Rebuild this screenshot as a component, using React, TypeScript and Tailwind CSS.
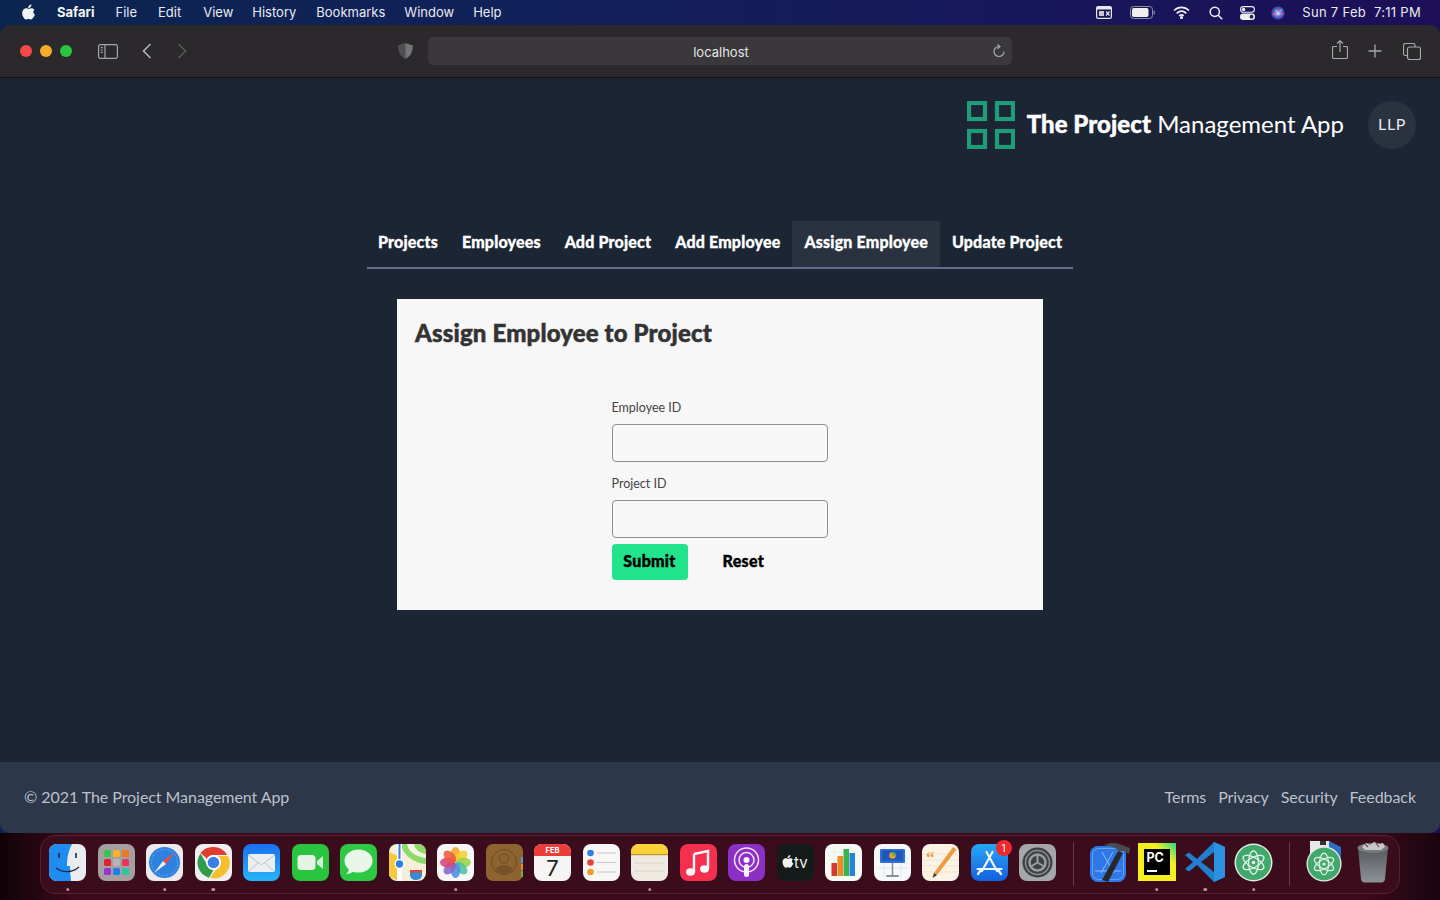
import React from "react";

const F = { fontFamily: 'Lato, "Liberation Sans", sans-serif' };
const U = { fontFamily: "Inter, sans-serif" };

const applePath = "M10.4 0.5c.1 1-.3 1.9-.9 2.6-.6.7-1.5 1.2-2.4 1.1-.1-1 .4-1.9.9-2.5.6-.7 1.6-1.2 2.4-1.2zM13.4 5.9c-1.7 1-1.5 3.6.5 4.5-.4 1.1-.9 2.2-1.6 3.2-.6.9-1.3 1.9-2.3 1.9-1 0-1.3-.6-2.5-.6s-1.5.6-2.5.6c-1 0-1.7-1-2.4-2C1.3 11.7.5 8.2 2.1 6c.8-1.1 2-1.7 3.1-1.7 1.1 0 1.8.7 2.7.7.9 0 1.4-.7 2.7-.7 1.1 0 2.1.5 2.8 1.6z";

function MenuBar() {
  return (
    <div className="h-[25px] shrink-0 flex items-center text-[13px] text-[#e9ebf2] pl-[21px] pr-[19px]" style={U}>
      <svg width="15" height="17" viewBox="0 0 15 17" fill="#f2f2f2"><path d={applePath} /></svg>
      <span className="ml-[21px] font-bold text-[#f4f4f6]">Safari</span>
      <div className="ml-[21px] flex">
        <span>File</span>
        <span className="ml-[21px]">Edit</span>
        <span className="ml-[22px]">View</span>
        <span className="ml-[19px]">History</span>
        <span className="ml-[20px]">Bookmarks</span>
        <span className="ml-[19px]">Window</span>
        <span className="ml-[19px]">Help</span>
      </div>
      <div className="ml-auto flex items-center">
        <svg width="16" height="13" viewBox="0 0 16 13" className="mr-[18px]">
          <rect x="0.6" y="0.6" width="14.8" height="11.8" rx="1.5" fill="none" stroke="#e8e8ee" strokeWidth="1.2" />
          <rect x="1" y="1" width="14" height="2.5" fill="#e8e8ee" />
          <rect x="3" y="5" width="5" height="5" fill="#c8c8d0" />
          <path d="M10 5.5l3.5 4M13.5 5.5l-3.5 4" stroke="#e8e8ee" strokeWidth="1.2" />
        </svg>
        <svg width="25" height="13" viewBox="0 0 25 13" className="mr-[18px]">
          <rect x="0.5" y="0.5" width="22" height="12" rx="3" fill="none" stroke="#8f8fa3" />
          <rect x="2" y="2" width="16.5" height="9" rx="1.8" fill="#f0f0f3" />
          <rect x="23.5" y="4.5" width="1.2" height="4" rx="0.6" fill="#8f8fa3" />
        </svg>
        <svg width="17" height="13" viewBox="0 0 17 13" fill="none" stroke="#f0f0f3" strokeWidth="1.7" className="mr-[19px]">
          <path d="M1 4.5C5.5 0.3 11.5 0.3 16 4.5" />
          <path d="M3.7 7.3c2.9-2.6 6.7-2.6 9.6 0" />
          <path d="M6.3 9.8c1.4-1.1 3-1.1 4.4 0" />
          <circle cx="8.5" cy="11.6" r="0.7" fill="#f0f0f3" />
        </svg>
        <svg width="14" height="14" viewBox="0 0 14 14" fill="none" stroke="#f0f0f3" strokeWidth="1.5" className="mr-[17px]">
          <circle cx="5.8" cy="5.8" r="4.6" />
          <path d="M9.2 9.2l4 4" />
        </svg>
        <svg width="15" height="14" viewBox="0 0 15 14" className="mr-[16px]">
          <rect x="0.6" y="0.6" width="13.8" height="5.6" rx="2.8" fill="none" stroke="#f0f0f3" strokeWidth="1.1" />
          <circle cx="3.6" cy="3.4" r="1.7" fill="#f0f0f3" />
          <rect x="0" y="7.5" width="15" height="6.5" rx="3.25" fill="#f0f0f3" />
          <circle cx="11.5" cy="10.75" r="1.9" fill="#2a2356" />
        </svg>
        <svg width="14" height="14" viewBox="0 0 14 14" className="mr-[17px]">
          <defs>
            <radialGradient id="siri" cx="0.5" cy="0.5" r="0.6">
              <stop offset="0" stopColor="#f5f5ff" />
              <stop offset="0.45" stopColor="#5a6de0" />
              <stop offset="1" stopColor="#2a1f5c" />
            </radialGradient>
          </defs>
          <circle cx="7" cy="7" r="6.8" fill="url(#siri)" />
          <path d="M2 9c2-1 3-4 5-4s2 3 5 3" stroke="#e75fa8" strokeWidth="1.4" fill="none" />
          <path d="M4 4l4 3 3-4" stroke="#5fe0e8" strokeWidth="1" fill="none" />
        </svg>
        <span className="tracking-[0.3px]">Sun 7 Feb&nbsp; 7:11 PM</span>
      </div>
    </div>
  );
}

function Toolbar() {
  return (
    <div className="h-[53px] shrink-0 flex items-center bg-[#2b292b] border-b border-[#151517] pl-[20px] pr-[19px] rounded-t-[10px]">
      <div className="flex gap-[8px]">
        <span className="w-[12px] h-[12px] rounded-full bg-[#f5484a]" />
        <span className="w-[12px] h-[12px] rounded-full bg-[#f7ab2a]" />
        <span className="w-[12px] h-[12px] rounded-full bg-[#2ac53f]" />
      </div>
      <svg width="20" height="15" viewBox="0 0 20 15" fill="none" stroke="#a5a5a7" strokeWidth="1.2" className="ml-[26px]">
        <rect x="0.6" y="0.6" width="18.8" height="13.8" rx="1.8" />
        <path d="M7 0.6v13.8" />
        <path d="M2.8 3.7h2M2.8 6h2M2.8 8.3h2" />
      </svg>
      <svg width="10" height="16" viewBox="0 0 10 16" fill="none" stroke="#b5b5b7" strokeWidth="1.6" className="ml-[24px] mb-[1px]">
        <path d="M8.5 1L1.5 8l7 7" />
      </svg>
      <svg width="10" height="16" viewBox="0 0 10 16" fill="none" stroke="#585858" strokeWidth="1.6" className="ml-[25px] mb-[1px]">
        <path d="M1.5 1l7 7-7 7" />
      </svg>
      <svg width="15" height="16" viewBox="0 0 15 16" className="ml-[211px]">
        <path d="M7.5 0.5L14.5 2.5c0 6-1.5 10.5-7 13-5.500-2.500-7-7-7-13z" fill="#4e4e50" stroke="#5e5e60" strokeWidth="0.6" />
        <path d="M7.5 0.5L14.5 2.5c0 6-1.5 10.5-7 13z" fill="#757577" />
      </svg>
      <div className="ml-[15px] w-[584px] h-[28px] rounded-[5px] bg-[#3a383a] flex items-center pr-[7px]">
        <span className="flex-1 text-center text-[13px] text-[#e5e5e6] pl-[21px] pt-[4px]" style={U}>localhost</span>
        <svg width="12" height="14" viewBox="0 0 12 14" fill="none" stroke="#a8a8aa" strokeWidth="1.2">
          <path d="M6 2.5A5 5 0 1 0 11 7.5" />
          <path d="M4.5 0.5L7 2.5 4.5 4.8" />
        </svg>
      </div>
      <svg width="16" height="19" viewBox="0 0 16 19" fill="none" stroke="#a8a8aa" strokeWidth="1.2" className="ml-auto mr-[20px] mb-[3px]">
        <path d="M5 6.5H1.5a1 1 0 0 0-1 1V17a1.5 1.5 0 0 0 1.5 1.5h12a1.5 1.5 0 0 0 1.5-1.5V7.5a1 1 0 0 0-1-1H11" />
        <path d="M8 12V1M5 3.5L8 .8l3 2.7" />
      </svg>
      <svg width="14" height="14" viewBox="0 0 14 14" stroke="#a8a8aa" strokeWidth="1.3" className="mr-[21px]">
        <path d="M7 0.5v13M0.5 7h13" />
      </svg>
      <svg width="18" height="17" viewBox="0 0 18 17" fill="none" stroke="#a8a8aa" strokeWidth="1.2">
        <path d="M4 12.5H2.5a2 2 0 0 1-2-2V2.5a2 2 0 0 1 2-2H10a2 2 0 0 1 2 2V4" />
        <rect x="4.5" y="4" width="13" height="12.5" rx="2" />
      </svg>
    </div>
  );
}

function Logo() {
  return (
    <svg width="48" height="48" viewBox="0 0 48 48" fill="none" stroke="#1f9c78" strokeWidth="4.2">
      <rect x="2" y="2" width="16" height="16" />
      <rect x="30" y="2" width="16" height="16" />
      <rect x="2" y="30" width="16" height="16" />
      <rect x="30" y="30" width="16" height="16" />
    </svg>
  );
}

function Header() {
  return (
    <div className="flex justify-end items-center pt-[23px] pr-[24px]">
      <Logo />
      <div className="ml-[12px] pb-[2px] text-[24px] text-white leading-none whitespace-nowrap" style={F}>
        <span className="font-black tracking-[0.05px] [-webkit-text-stroke:0.4px]">The Project</span>{" "}
        <span className="font-normal">Management App</span>
      </div>
      <div className="ml-[24px] w-[48px] h-[48px] pb-[2px] rounded-full bg-[#2a3240] flex items-center justify-center text-[16px] text-[#e6e8ec] tracking-[0.6px]" style={F}>LLP</div>
    </div>
  );
}

function Nav() {
  const tabs = ["Projects", "Employees", "Add Project", "Add Employee", "Assign Employee", "Update Project"];
  return (
    <div className="mt-[72px] self-center w-[706px] border-b-2 border-[#636d8a] h-[48px]">
      <div className="flex -ml-px">
        {tabs.map((t) => (
          <div key={t} className={`h-[46px] px-[12px] pb-[4px] flex items-center text-[16px] font-black tracking-[0.17px] [-webkit-text-stroke:0.3px] whitespace-nowrap text-white ${t === "Assign Employee" ? "bg-[#2a3240]" : ""}`} style={F}>
            {t}
          </div>
        ))}
      </div>
    </div>
  );
}

function Field({ label }: { label: string }) {
  return (
    <div className="flex flex-col">
      <label className="text-[12.5px] leading-[16px] text-[#444444] h-[16px]" style={F}>{label}</label>
      <input className="mt-[8px] h-[38px] w-[216.5px] rounded-[4px] border border-[#8e8e8e] bg-[#f7f7f7]" />
    </div>
  );
}

function Card() {
  return (
    <div className="mt-[30px] self-center w-[646px] h-[311px] bg-[#f7f7f7] flex flex-col">
      <h1 className="mt-[18px] ml-[18px] text-[24px] leading-[32px] font-black text-[#333333] tracking-[0.15px] [-webkit-text-stroke:0.5px]" style={F}>Assign Employee to Project</h1>
      <div className="mt-[51px] ml-[214.5px] flex flex-col gap-[14px]">
        <Field label="Employee ID" />
        <Field label="Project ID" />
      </div>
      <div className="mt-[6px] ml-[214.5px] flex items-center">
        <button className="w-[76px] h-[36px] pb-[2px] rounded-[4px] bg-[#20e38b] text-[16px] font-black text-black tracking-[0.3px] [-webkit-text-stroke:0.4px]" style={F}>Submit</button>
        <button className="ml-[35px] pb-[2px] text-[16px] font-black text-black tracking-[0.3px] [-webkit-text-stroke:0.4px]" style={F}>Reset</button>
      </div>
    </div>
  );
}

function Footer() {
  return (
    <div className="mt-auto h-[71px] pb-[2px] shrink-0 bg-[#2c374a] flex items-center justify-between px-[24px] text-[16px] text-[#bcc1ca] tracking-[-0.06px]" style={F}>
      <span>© 2021 The Project Management App</span>
      <div className="flex gap-[12px]">
        <span>Terms</span>
        <span>Privacy</span>
        <span>Security</span>
        <span>Feedback</span>
      </div>
    </div>
  );
}

const I = ({ children }: { children: React.ReactNode }) => (
  <svg width="37" height="37" viewBox="0 0 37 37">{children}</svg>
);

function Finder() {
  return (
    <I>
      <rect width="37" height="37" rx="8" fill="#e9edf1" />
      <path d="M8 0h15c-3 6-5 12-5 22h3c0 5 .5 10 1 15H8a8 8 0 0 1-8-8V8a8 8 0 0 1 8-8z" fill="#1f8cf0" />
      <path d="M10 9v5M27 9v5" stroke="#1c2c44" strokeWidth="1.6" />
      <path d="M7 24c7 5 16 5 23-1" fill="none" stroke="#1c2c44" strokeWidth="1.3" />
    </I>
  );
}
function Launchpad() {
  const c = ["#38c452", "#f5b324", "#ee7a1e", "#e0202e", "#b5b5b5", "#ea3560", "#9a35cf", "#1e80ea", "#2cc7a0"];
  return (
    <I>
      <rect width="37" height="37" rx="8" fill="#a79ea1" />
      {c.map((f, i) => (
        <rect key={i} x={6 + (i % 3) * 9} y={6 + Math.floor(i / 3) * 9} width="7" height="7" rx="1.5" fill={f} />
      ))}
    </I>
  );
}
function Safari() {
  return (
    <I>
      <rect width="37" height="37" rx="8" fill="#eceaea" />
      <circle cx="18.5" cy="18.5" r="15.5" fill="#2f81e0" />
      <circle cx="18.5" cy="18.5" r="13" fill="none" stroke="#a8cdf5" strokeWidth="1" strokeDasharray="0.8 2" />
      <path d="M29 8L20 20l-3-3z" fill="#ef4a3c" />
      <path d="M8 29l9-12 3 3z" fill="#f0f0f0" />
    </I>
  );
}
function Chrome() {
  return (
    <I>
      <rect width="37" height="37" rx="8" fill="#f0eeee" />
      <path d="M18.5 3A15.5 15.5 0 0 1 32 11H18.5a7.5 7.5 0 0 0-6.5 3.7L5.5 9A15.5 15.5 0 0 1 18.5 3z" fill="#e03c32" />
      <path d="M5.5 9.5L12 20.5a7.5 7.5 0 0 0 7 4.5l-5 8.7A15.5 15.5 0 0 1 5.5 9.5z" fill="#2e9c4a" />
      <path d="M33 12a15.5 15.5 0 0 1-18 21.8L22 24a7.5 7.5 0 0 0 1-12z" fill="#f5c02e" />
      <circle cx="18.5" cy="18.5" r="7.5" fill="#fff" />
      <circle cx="18.5" cy="18.5" r="5.8" fill="#3a7fe8" />
    </I>
  );
}
function Mail() {
  return (
    <I>
      <defs>
        <linearGradient id="mailg" x1="0" y1="0" x2="0" y2="1">
          <stop offset="0" stopColor="#1a6ff0" />
          <stop offset="1" stopColor="#26b5f8" />
        </linearGradient>
      </defs>
      <rect width="37" height="37" rx="8" fill="url(#mailg)" />
      <rect x="5" y="10" width="27" height="18" rx="2" fill="#eceef2" />
      <path d="M5.5 11l13 10 13-10M5.5 27.5l10-9M31.5 27.5l-10-9" fill="none" stroke="#b5bcc8" strokeWidth="0.9" />
    </I>
  );
}
function Facetime() {
  return (
    <I>
      <rect width="37" height="37" rx="8" fill="#2ac53f" />
      <rect x="5.5" y="11" width="18" height="15" rx="3.5" fill="#e4f3e4" />
      <path d="M25 17l6-5v13l-6-5z" fill="#d8efd8" />
    </I>
  );
}
function Messages() {
  return (
    <I>
      <rect width="37" height="37" rx="8" fill="#2ec944" />
      <ellipse cx="18.5" cy="17" rx="14" ry="11.5" fill="#e9f5e9" />
      <path d="M9 24c0 3-1.5 5-3 6 3 0 6-1 8-3z" fill="#e9f5e9" />
    </I>
  );
}
function Maps() {
  return (
    <I>
      <rect width="37" height="37" rx="8" fill="#f5efd8" />
      <path d="M12 0h17a8 8 0 0 1 8 8v12C30 20 14 14 12 0z" fill="#8fd86a" />
      <path d="M18 0h7c1 6 6 9 12 10v4C28 13 19 8 18 0z" fill="#f4f4e4" />
      <path d="M0 8v24l9 5V12z" fill="#f4c93c" />
      <rect x="8" y="0" width="5" height="37" fill="#fff" />
      <rect x="9.5" y="0" width="2" height="15" fill="#2f7fe8" />
      <circle cx="10.5" cy="20" r="5" fill="#fff" />
      <circle cx="10.5" cy="20" r="3.7" fill="#2f7fe8" />
      <path d="M21 26h12v6c-1 3-4 4-6 4-3 0-6-2-6-5z" fill="#3a8ad0" />
      <rect x="21" y="26" width="12" height="2.5" fill="#e0443a" />
    </I>
  );
}
function Photos() {
  const c = ["#f5a623", "#f3d22e", "#9ed24a", "#4fc3a0", "#4a8fe0", "#8a65c8", "#d8457a", "#ee5a3a"];
  return (
    <I>
      <rect width="37" height="37" rx="8" fill="#f7f7f7" />
      {c.map((f, i) => (
        <ellipse key={i} cx="18.5" cy="10.5" rx="4.8" ry="7.5" fill={f} opacity="0.88" transform={`rotate(${i * 45} 18.5 18.5)`} />
      ))}
    </I>
  );
}
function Contacts() {
  return (
    <I>
      <rect width="37" height="37" rx="7" fill="#8d6430" />
      <rect x="35" y="13" width="2" height="6" fill="#4a9ad0" />
      <rect x="35" y="20" width="2" height="6" fill="#e08a2c" />
      <rect x="35" y="27" width="2" height="6" fill="#6ab04c" />
      <circle cx="18" cy="18" r="12.5" fill="none" stroke="#6a4a24" strokeWidth="1" />
      <circle cx="18" cy="14.5" r="4.7" fill="none" stroke="#6a4a24" strokeWidth="1" />
      <path d="M9 27c2-5 5-6 9-6s7 1 9 6c-5 4-13 4-18 0z" fill="#75522a" />
    </I>
  );
}
function Calendar() {
  return (
    <I>
      <rect width="37" height="37" rx="8" fill="#f7f5f4" />
      <path d="M8 0h21a8 8 0 0 1 8 8v4H0V8a8 8 0 0 1 8-8z" fill="#ea3e3a" />
      <text x="18.5" y="9" textAnchor="middle" fontSize="7.5" fontWeight="700" fill="#fff" fontFamily="Inter, sans-serif">FEB</text>
      <text x="18.5" y="32" textAnchor="middle" fontSize="22" fill="#222" fontFamily="Inter, sans-serif">7</text>
    </I>
  );
}
function Reminders() {
  const rows: [number, string][] = [[9, "#2f7fe8"], [18.5, "#e0443a"], [28, "#ef9a2a"]];
  return (
    <I>
      <rect width="37" height="37" rx="8" fill="#f8f7f5" />
      {rows.map(([y, f]) => (
        <g key={y}>
          <circle cx="7.5" cy={y} r="3.3" fill={f} />
          <rect x="14" y={y - 0.5} width="19" height="1" fill="#c6c6c6" />
        </g>
      ))}
    </I>
  );
}
function Notes() {
  return (
    <I>
      <rect width="37" height="37" rx="8" fill="#eeeae2" />
      <path d="M8 0h21a8 8 0 0 1 8 8v2H0V8a8 8 0 0 1 8-8z" fill="#fbd13a" />
      <rect y="10" width="37" height="1.2" fill="#b8952a" />
      <path d="M3 19h31M3 27h31" stroke="#d5d0c6" strokeWidth="0.8" />
    </I>
  );
}
function Music() {
  return (
    <I>
      <rect width="37" height="37" rx="8" fill="#f5304e" />
      <path d="M14 10l14-3v18" fill="none" stroke="#f8f8f8" strokeWidth="2.4" />
      <path d="M14 10v18" stroke="#f8f8f8" strokeWidth="2.4" />
      <ellipse cx="10.5" cy="28" rx="4.5" ry="3.7" fill="#f8f8f8" />
      <ellipse cx="24.5" cy="25" rx="4.5" ry="3.7" fill="#f8f8f8" />
    </I>
  );
}
function Podcasts() {
  return (
    <I>
      <rect width="37" height="37" rx="8" fill="#8c2fc4" />
      <circle cx="18.5" cy="16" r="12" fill="none" stroke="#f0e4f8" strokeWidth="1.5" />
      <circle cx="18.5" cy="16" r="7.5" fill="none" stroke="#f0e4f8" strokeWidth="1.5" />
      <circle cx="18.5" cy="16" r="3" fill="#f8f0fc" />
      <rect x="16" y="20" width="5" height="13" rx="2.5" fill="#f8f0fc" />
    </I>
  );
}
function AppleTV() {
  return (
    <I>
      <rect width="37" height="37" rx="8" fill="#151a1a" />
      <g transform="translate(4.5 10.5) scale(0.85)">
        <path d={applePath} fill="#f0f0f0" />
      </g>
      <text x="17" y="23.5" fontSize="15" fill="#f0f0f0" fontFamily="Inter, sans-serif">tv</text>
    </I>
  );
}
function Numbers() {
  return (
    <I>
      <rect width="37" height="37" rx="8" fill="#f7f9f5" />
      <path d="M5 8h27M5 15h27M5 22h27M5 29h27M9 3v31M17 3v31M25 3v31" stroke="#dbe8d8" strokeWidth="0.5" />
      <rect x="6.5" y="19" width="5.5" height="13" fill="#d53a2e" />
      <rect x="12.5" y="12" width="5.5" height="20" fill="#ee8a26" />
      <rect x="18.5" y="5" width="5.5" height="27" fill="#38b54a" />
      <rect x="24.5" y="9" width="5.5" height="23" fill="#2a80dc" />
    </I>
  );
}
function Keynote() {
  return (
    <I>
      <rect width="37" height="37" rx="8" fill="#f7f8f9" />
      <path d="M3 14h31M3 24h31M10 3v31M27 3v31" stroke="#d6e2ee" strokeWidth="0.7" />
      <rect x="6" y="5" width="25" height="14" rx="1" fill="#2f6fd8" />
      <rect x="8" y="6.5" width="21" height="10" fill="#1f58b8" />
      <circle cx="18.5" cy="11.5" r="3.3" fill="#e2a03a" />
      <path d="M18.5 8.2a3.3 3.3 0 0 1 3.3 3.3h-3.3z" fill="#4ab04a" />
      <rect x="17.7" y="19" width="1.6" height="13" fill="#8c8f94" />
      <rect x="12" y="31" width="13" height="2" rx="1" fill="#8c8f94" />
    </I>
  );
}
function Pages() {
  return (
    <I>
      <rect width="37" height="37" rx="8" fill="#fbf3e6" />
      <path d="M0 10h37M0 16h37M0 22h37M0 28h37" stroke="#f3d9c0" strokeWidth="0.6" />
      <text x="4" y="19" fontSize="17" fontWeight="700" fill="#ee9a3a" fontFamily="Liberation Serif, serif">“</text>
      <path d="M31 3l3.5 2.5L15 31l-3-2z" fill="#ee9a3a" />
      <path d="M12 29l3 2-4.5 3z" fill="#3a3a3a" />
    </I>
  );
}
function AppStore() {
  return (
    <I>
      <defs>
        <linearGradient id="asg" x1="0" y1="0" x2="0" y2="1">
          <stop offset="0" stopColor="#26a8f5" />
          <stop offset="1" stopColor="#1560e0" />
        </linearGradient>
      </defs>
      <rect width="37" height="37" rx="8" fill="url(#asg)" />
      <path d="M21.5 8L11 27M15.5 8L26 27M6.5 25h24M7 30l2.5-3.5M30 30l-2.5-3.5" stroke="#f4f8fd" strokeWidth="2.2" strokeLinecap="round" />
    </I>
  );
}
function Settings() {
  return (
    <I>
      <rect width="37" height="37" rx="8" fill="#a5a7a8" />
      <circle cx="18.5" cy="18.5" r="15" fill="#3e4042" />
      <circle cx="18.5" cy="18.5" r="12" fill="none" stroke="#8c8e90" strokeWidth="1.5" />
      <circle cx="18.5" cy="18.5" r="8" fill="none" stroke="#9a9c9e" strokeWidth="2.5" />
      <path d="M18.5 18.5V10M18.5 18.5l7.5 4.5M18.5 18.5L11 23" stroke="#9a9c9e" strokeWidth="2" />
    </I>
  );
}
function Xcode() {
  return (
    <svg width="46" height="42" viewBox="0 0 46 42">
      <rect x="5" y="5" width="36" height="36" rx="8" fill="#2f78e8" />
      <rect x="7.5" y="7.5" width="31" height="31" rx="6" fill="none" stroke="#74acf5" strokeWidth="0.8" />
      <path d="M28 11L16 32M17 11l12 21M10 30h26" stroke="#8ebcf5" strokeWidth="1" fill="none" />
      <path d="M33 10l5 2-15 29-6-2z" fill="#26282c" />
      <path d="M19 4C26 1 32 2 37 4l8 3-1 6-5-3-5 0C30 6 25 5 19 4z" fill="#4a4c50" />
    </svg>
  );
}
function PyCharm() {
  return (
    <svg width="38" height="38" viewBox="0 0 38 38">
      <defs>
        <linearGradient id="pcg" x1="0" y1="1" x2="1" y2="0">
          <stop offset="0" stopColor="#f4f020" />
          <stop offset="0.7" stopColor="#f4f020" />
          <stop offset="1" stopColor="#22d88a" />
        </linearGradient>
      </defs>
      <rect width="38" height="38" fill="url(#pcg)" />
      <rect x="6" y="6" width="26" height="26" fill="#000" />
      <text x="8.5" y="18.5" fontSize="12.5" fontWeight="700" fill="#fff" fontFamily="Inter, sans-serif">PC</text>
      <rect x="9" y="27" width="10" height="2" fill="#fff" />
    </svg>
  );
}
function VSCode() {
  return (
    <svg width="40" height="40" viewBox="0 0 40 40">
      <path d="M29 0l11 5v30l-11 5L12 23l-8 6.5L0 27l8-7-8-7 4-2.5 8 6.5z" fill="#1f7fd0" />
      <path d="M29 0l11 5v30l-11 5z" fill="#2a92e0" />
      <path d="M29 10L16 20l13 10z" fill="#3d1520" />
    </svg>
  );
}
function AtomGlyph() {
  return (
    <>
      <circle cx="20" cy="20" r="19.5" fill="#e6e8e4" />
      <circle cx="20" cy="20" r="18" fill="#3fa86a" />
      <g fill="none" stroke="#e8f4ea" strokeWidth="1.3">
        <ellipse cx="20" cy="20" rx="12" ry="5" transform="rotate(30 20 20)" />
        <ellipse cx="20" cy="20" rx="12" ry="5" transform="rotate(-30 20 20)" />
        <ellipse cx="20" cy="20" rx="5" ry="12" />
      </g>
      <circle cx="20" cy="20" r="1.8" fill="#e8f4ea" />
    </>
  );
}
function Atom() {
  return (
    <svg width="39" height="39" viewBox="0 0 40 40"><AtomGlyph /></svg>
  );
}
function AtomDoc() {
  return (
    <svg width="38" height="42" viewBox="0 0 38 42">
      <rect x="5" y="0" width="20" height="14" fill="#e8e8ea" />
      <rect x="15" y="0" width="6" height="4" fill="#333" />
      <path d="M24 0l12 6v12H24z" fill="#2a6fc8" />
      <g transform="translate(1 5) scale(0.9)"><AtomGlyph /></g>
    </svg>
  );
}
function Trash() {
  return (
    <svg width="34" height="42" viewBox="0 0 34 42">
      <defs>
        <linearGradient id="trg" x1="0" y1="0" x2="0" y2="1">
          <stop offset="0" stopColor="#55585c" />
          <stop offset="1" stopColor="#8e9196" />
        </linearGradient>
      </defs>
      <path d="M2 7h30l-3 31c-.2 2-1.5 3.5-3.5 3.5h-17c-2 0-3.3-1.5-3.5-3.5z" fill="url(#trg)" />
      <ellipse cx="17" cy="7" rx="15.5" ry="5" fill="#767a7e" />
      <path d="M6 6l4-4 4 2 4-3 5 2 4-1 2 4-4 3H9z" fill="#c6c8ca" />
      <path d="M9 3l3 3M20 2l3 4" stroke="#8c3a3a" strokeWidth="1.2" />
    </svg>
  );
}

function Slot({ children, dot }: { children: React.ReactNode; dot?: boolean }) {
  return (
    <div className="relative w-[48.5px] h-full flex items-center justify-center pb-[5px]">
      {children}
      {dot && <span className="absolute left-1/2 -translate-x-1/2 bottom-[2px] w-[3.5px] h-[3.5px] rounded-full bg-[#b98a9b]" />}
    </div>
  );
}

function Dock() {
  return (
    <div className="mt-[2px] ml-[40px] w-[1360px] h-[59px] rounded-[15px] border border-[#55222f] bg-[#3a0c1c] flex items-center pl-[2.5px]">
      <Slot dot><Finder /></Slot>
      <Slot><Launchpad /></Slot>
      <Slot dot><Safari /></Slot>
      <Slot dot><Chrome /></Slot>
      <Slot><Mail /></Slot>
      <Slot><Facetime /></Slot>
      <Slot><Messages /></Slot>
      <Slot><Maps /></Slot>
      <Slot dot><Photos /></Slot>
      <Slot><Contacts /></Slot>
      <Slot><Calendar /></Slot>
      <Slot><Reminders /></Slot>
      <Slot dot><Notes /></Slot>
      <Slot><Music /></Slot>
      <Slot><Podcasts /></Slot>
      <Slot><AppleTV /></Slot>
      <Slot><Numbers /></Slot>
      <Slot><Keynote /></Slot>
      <Slot><Pages /></Slot>
      <Slot>
        <AppStore />
        <span className="absolute top-[4px] right-[2px] w-[16px] h-[16px] rounded-full bg-[#ee2a2e] text-white text-[10px] flex items-center justify-center" style={U}>1</span>
      </Slot>
      <Slot><Settings /></Slot>
      <div className="w-[22px] h-full flex items-center justify-center pb-[2px]"><span className="w-px h-[44px] bg-[#6b3a48]" /></div>
      <Slot><Xcode /></Slot>
      <Slot dot><PyCharm /></Slot>
      <Slot dot><VSCode /></Slot>
      <Slot dot><Atom /></Slot>
      <div className="w-[22px] h-full flex items-center justify-center pb-[2px]"><span className="w-px h-[44px] bg-[#6b3a48]" /></div>
      <Slot><AtomDoc /></Slot>
      <Slot><Trash /></Slot>
    </div>
  );
}

export default function App() {
  return (
    <div className="w-[1440px] h-[900px] overflow-hidden flex flex-col bg-[linear-gradient(90deg,#0f0308_0%,#3a0a1a_5%,#3a0a1a_95%,#1a0410_100%)]">
      <div className="bg-[linear-gradient(90deg,#0c2550_0%,#11205a_40%,#1d0f58_100%)]">
        <MenuBar />
        <div className="h-[808px] flex flex-col bg-[#1c2533] rounded-[10px] overflow-hidden">
          <Toolbar />
          <div className="flex-1 flex flex-col min-h-0">
            <Header />
            <Nav />
            <Card />
            <Footer />
          </div>
        </div>
      </div>
      <Dock />
    </div>
  );
}
